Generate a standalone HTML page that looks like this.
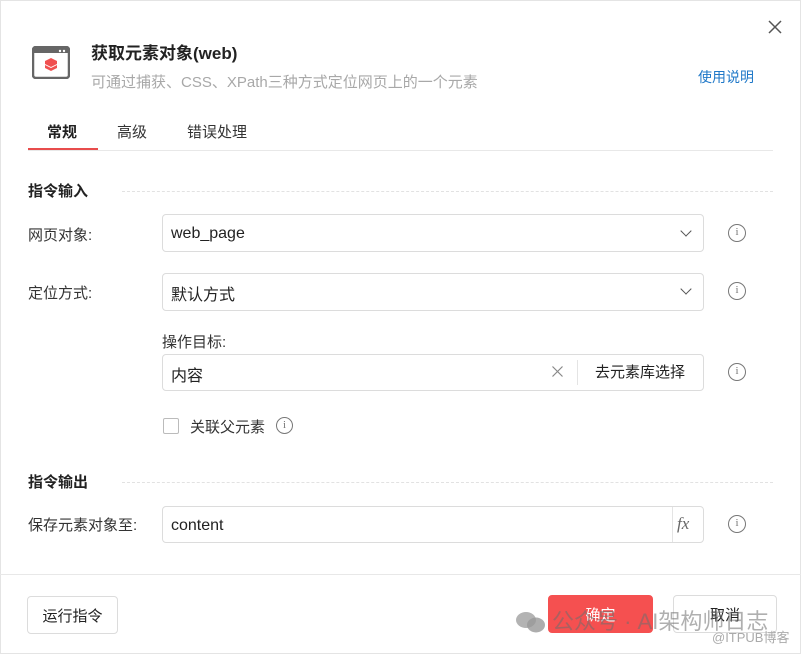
<!DOCTYPE html>
<html><head><meta charset="utf-8"><style>
*{box-sizing:border-box;margin:0;padding:0}
body{width:801px;height:654px;background:#fff;font-family:"Liberation Sans","Noto Sans CJK SC",sans-serif;color:#333;position:relative;overflow:hidden;box-shadow:inset 0 0 0 1px #e4e4e4}
.a{position:absolute;line-height:20px;white-space:nowrap}
.lbl{font-size:15px;color:#333}
.box{position:absolute;border:1px solid #dcdcdc;border-radius:4px;background:#fff;font-size:16px;color:#222;padding-left:8px;padding-top:2px;display:flex;align-items:center}
.info{position:absolute;width:18px;height:18px;border:1.3px solid #777;border-radius:50%;font-size:11px;color:#777;text-align:center;line-height:15px;font-family:"Liberation Serif",serif}
.dash{position:absolute;border-top:1px dashed #e2e2e2;height:0}
.chev{position:absolute;width:8px;height:8px;border-right:1.5px solid #555;border-bottom:1.5px solid #555;transform:rotate(45deg)}
.btn{position:absolute;border:1px solid #dcdcdc;border-radius:4px;font-size:15px;display:flex;align-items:center;justify-content:center}
</style></head><body>
<svg class="a" style="left:768px;top:20px" width="14" height="14"><path d="M1 1L13 13M13 1L1 13" stroke="#555" stroke-width="1.5"/></svg>
<svg class="a" style="left:32px;top:46px" width="38" height="33" viewBox="0 0 38 33"><rect x="1" y="1" width="36" height="31" rx="3" fill="#fff" stroke="#666" stroke-width="2.5"/><rect x="1" y="1" width="36" height="6" fill="#666"/><circle cx="28" cy="5" r="1.2" fill="#fff"/><circle cx="32" cy="5" r="1.2" fill="#fff"/><path d="M13 15l6 3 6-3v3l-6 3-6-3z M13 19l6 3 6-3v3l-6 3-6-3z M19 12l6 3-6 3-6-3z" fill="#f05050"/></svg>
<div class="a" style="left:91px;top:44px;font-size:17px;font-weight:bold;color:#222">获取元素对象(web)</div>
<div class="a" style="left:91px;top:73px;font-size:15px;color:#a8a8a8">可通过捕获、CSS、XPath三种方式定位网页上的一个元素</div>
<div class="a" style="left:698px;top:67px;font-size:14px;color:#1f78c8">使用说明</div>
<div class="a" style="left:47px;top:123px;font-size:15px;font-weight:bold;color:#222">常规</div>
<div class="a" style="left:117px;top:123px;font-size:15px;color:#333">高级</div>
<div class="a" style="left:187px;top:123px;font-size:15px;color:#333">错误处理</div>
<div class="a" style="left:28px;top:150px;width:745px;height:1px;background:#e8e8e8"></div>
<div class="a" style="left:28px;top:148px;width:70px;height:2px;background:#e84c4c"></div>
<div class="a" style="left:28px;top:182px;font-size:15px;font-weight:bold;color:#222">指令输入</div>
<div class="dash" style="left:122px;top:191px;width:651px"></div>
<div class="a lbl" style="left:28px;top:226px">网页对象:</div>
<div class="box" style="left:162px;top:214px;width:542px;height:38px">web_page</div><div class="chev" style="left:682px;top:227px"></div>
<div class="info" style="left:728px;top:224px">i</div>
<div class="a lbl" style="left:28px;top:284px">定位方式:</div>
<div class="box" style="left:162px;top:273px;width:542px;height:38px">默认方式</div><div class="chev" style="left:682px;top:285px"></div>
<div class="info" style="left:728px;top:282px">i</div>
<div class="a lbl" style="left:162px;top:333px">操作目标:</div>
<div class="box" style="left:162px;top:354px;width:542px;height:37px">内容</div>
<svg class="a" style="left:552px;top:366px" width="11" height="11"><path d="M.5 .5L10.5 10.5M10.5 .5L.5 10.5" stroke="#888" stroke-width="1.2"/></svg>
<div class="a" style="left:577px;top:360px;width:1px;height:25px;background:#e4e4e4"></div>
<div class="a" style="left:595px;top:363px;font-size:15px;color:#222">去元素库选择</div>
<div class="info" style="left:728px;top:363px">i</div>
<div class="a" style="left:163px;top:418px;width:16px;height:16px;border:1px solid #bbb;border-radius:2px"></div>
<div class="a lbl" style="left:190px;top:418px">关联父元素</div>
<div class="info" style="left:276px;top:417px;width:17px;height:17px;line-height:14px">i</div>
<div class="a" style="left:28px;top:473px;font-size:15px;font-weight:bold;color:#222">指令输出</div>
<div class="dash" style="left:122px;top:482px;width:651px"></div>
<div class="a lbl" style="left:28px;top:516px">保存元素对象至:</div>
<div class="box" style="left:162px;top:506px;width:542px;height:37px">content</div>
<div class="a" style="left:672px;top:507px;width:1px;height:35px;background:#e4e4e4"></div>
<div class="a" style="left:677px;top:514px;font-size:17px;font-style:italic;color:#666;font-family:'Liberation Serif',serif">fx</div>
<div class="info" style="left:728px;top:515px">i</div>
<div class="a" style="left:0;top:574px;width:801px;height:1px;background:#e8e8e8"></div>
<div class="btn" style="left:27px;top:596px;width:91px;height:38px;color:#222">运行指令</div>
<div class="btn" style="left:548px;top:595px;width:105px;height:38px;background:#f55050;border-color:#f55050;color:#fff">确定</div>
<div class="btn" style="left:673px;top:595px;width:104px;height:38px;color:#222">取消</div>
<svg class="a" style="left:515px;top:610px" width="32" height="24"><ellipse cx="11" cy="10" rx="10" ry="8" fill="#999" opacity=".75"/><ellipse cx="21" cy="15" rx="9" ry="7.5" fill="#999" opacity=".8"/></svg>
<div class="a" style="left:552px;top:609px;font-size:22px;line-height:26px;color:rgba(110,110,110,.55)">公众号 · AI架构师日志</div>
<div class="a" style="left:712px;top:628px;font-size:13px;color:#aaa">@ITPUB博客</div>
</body></html>
